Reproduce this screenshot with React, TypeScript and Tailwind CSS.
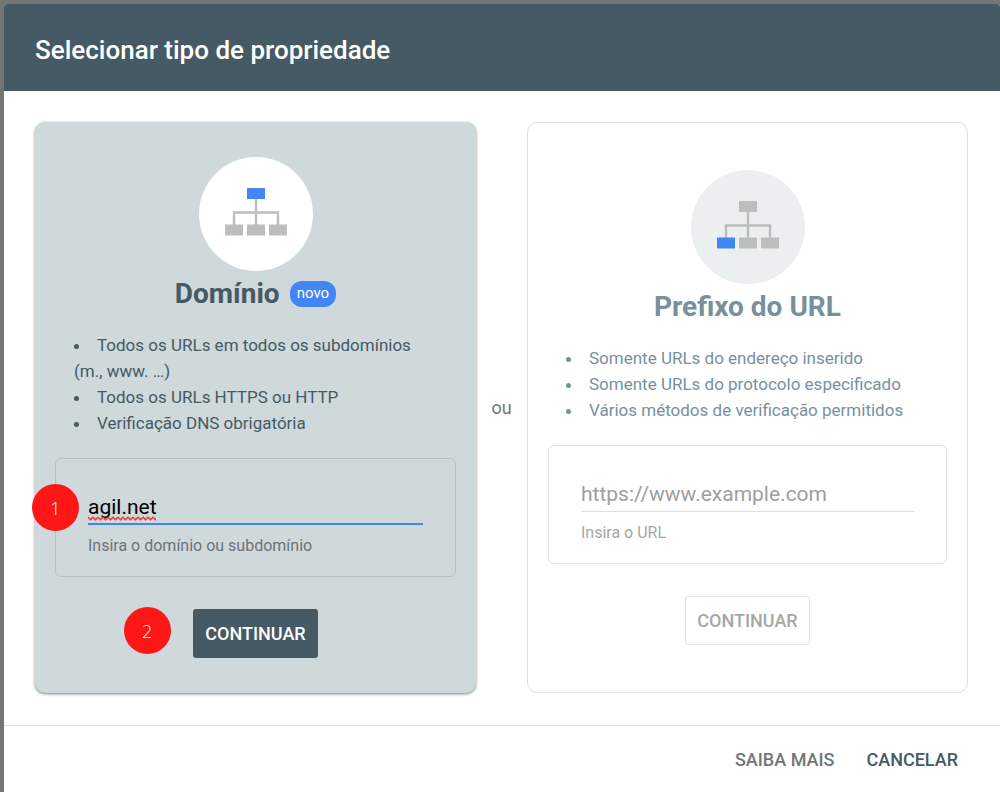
import type { ReactNode } from 'react';

const BLUE = '#4285f4';
const GREY = '#bdbdbd';

function SitemapIcon({ highlight }: { highlight: 'root' | 'leaf' }) {
  return (
    <svg className="mb-1" width="62" height="48" viewBox="0 0 62 48" aria-hidden="true">
      <path d="M31 10V38M9 38V24.5H53V38" fill="none" stroke={GREY} strokeWidth="2.4" />
      <rect x="22" y="0" width="18" height="11" fill={highlight === 'root' ? BLUE : GREY} />
      <rect x="0" y="36.5" width="18" height="11" fill={highlight === 'leaf' ? BLUE : GREY} />
      <rect x="22" y="36.5" width="18" height="11" fill={GREY} />
      <rect x="44" y="36.5" width="18" height="11" fill={GREY} />
    </svg>
  );
}

function SpellingMark() {
  return (
    <svg
      className="pointer-events-none absolute bottom-1 left-0"
      width="68"
      height="5"
      viewBox="0 0 68 5"
      aria-hidden="true"
    >
      <defs>
        <pattern id="spelling-wave" width="5" height="5" patternUnits="userSpaceOnUse">
          <path d="M-1 0.2L0 1.2L2.5 3.7L5 1.2L6 0.2" fill="none" stroke="#f03535" strokeWidth="1.5" />
        </pattern>
      </defs>
      <rect width="68" height="5" fill="url(#spelling-wave)" />
    </svg>
  );
}

function Step({ children, className }: { children: ReactNode; className: string }) {
  return (
    <span
      className={`absolute flex size-[47px] items-center justify-center rounded-full bg-[#ff1616] font-['Open_Sans',sans-serif] text-lg font-light text-white ${className}`}
    >
      {children}
    </span>
  );
}

export default function App() {
  return (
    <div className="min-h-screen bg-[#757575] pt-1 pl-1 font-[Roboto,sans-serif]">
      <div
        role="dialog"
        aria-labelledby="dialog-title"
        className="flex min-h-[calc(100vh-4px)] flex-col overflow-hidden rounded-t-[3px] bg-white"
      >
        <header className="bg-[#455a64] px-[31px] pt-[30px] pb-[25px]">
          <h1 id="dialog-title" className="text-[26px] leading-8 font-medium text-white">
            Selecionar tipo de propriedade
          </h1>
        </header>

        <main className="grid grow grid-cols-[1fr_51px_1fr] pt-[31px] pr-8 pb-8 pl-[31px]">
          <section className="flex flex-col items-center justify-center rounded-[10px] bg-[#cfd8db] px-5 py-[35px] shadow-[0_1px_3px_rgba(0,0,0,0.5)]">
            <div className="flex size-[114px] items-center justify-center rounded-full bg-white">
              <SitemapIcon highlight="root" />
            </div>
            <div className="mb-4 flex h-[45px] items-center gap-[10px]">
              <h2 className="text-[28px] font-bold text-[#455a64]">Domínio</h2>
              <span className="flex h-[26px] items-center rounded-xl bg-[#4285f4] px-[7px] text-[15px] text-white">
                novo
              </span>
            </div>
            <ul className="w-full list-inside list-disc px-[19px] text-[17px] leading-[26px] text-[#455a64]">
              <li>Todos os URLs em todos os subdomínios (m., www. …)</li>
              <li>Todos os URLs HTTPS ou HTTP</li>
              <li>Verificação DNS obrigatória</li>
            </ul>
            <div className="relative mt-[22px] w-full rounded-md border border-[#b7c0c4] px-8 pt-8 pb-5">
              <Step className="top-[25px] -left-6">1</Step>
              <div className="relative">
                <input
                  id="domain"
                  type="text"
                  defaultValue="agil.net"
                  spellCheck={false}
                  className="block h-[34px] w-full border-b-2 border-[#4285f4] bg-transparent text-[21px] text-black outline-none"
                />
                <SpellingMark />
              </div>
              <label htmlFor="domain" className="mt-[11px] block text-base leading-5 text-[#6b7478]">
                Insira o domínio ou subdomínio
              </label>
            </div>
            <div className="relative mt-8">
              <Step className="-top-[2px] right-[147px]">2</Step>
              <button
                type="button"
                className="h-[49px] rounded-[3px] bg-[#455a64] px-3 text-lg font-medium text-white"
              >
                CONTINUAR
              </button>
            </div>
          </section>

          <div className="flex items-center justify-center text-lg text-[#757575]">ou</div>

          <section className="flex flex-col items-center justify-center rounded-[10px] border border-[#e0e0e0] px-5 py-[35px]">
            <div className="flex size-[114px] items-center justify-center rounded-full bg-[#eceff0]">
              <SitemapIcon highlight="leaf" />
            </div>
            <div className="mb-4 flex h-[45px] items-center">
              <h2 className="text-[28px] font-bold text-[#78909c]">Prefixo do URL</h2>
            </div>
            <ul className="w-full list-inside list-disc px-[18px] text-[17px] leading-[26px] text-[#78909c]">
              <li>Somente URLs do endereço inserido</li>
              <li>Somente URLs do protocolo especificado</li>
              <li>Vários métodos de verificação permitidos</li>
            </ul>
            <div className="mt-[22px] w-full rounded-md border border-[#e0e0e0] px-8 pt-8 pb-5">
              <input
                id="url"
                type="text"
                placeholder="https://www.example.com"
                className="block h-[34px] w-full border-b border-[#e0e0e0] bg-transparent pb-[2px] text-[21px] text-black outline-none placeholder:text-[#9e9e9e]"
              />
              <label htmlFor="url" className="mt-[11px] block text-base leading-5 text-[#a6a6a6]">
                Insira o URL
              </label>
            </div>
            <button
              type="button"
              className="mt-8 h-[49px] rounded-[3px] border border-[#e0e0e0] px-[11px] text-lg font-medium text-[#a6a6a6]"
            >
              CONTINUAR
            </button>
          </section>
        </main>

        <footer className="flex justify-end gap-8 border-t border-[#e0e0e0] px-[42px] pt-5 pb-[18px] text-lg font-medium">
          <button type="button" className="text-[#757575]">
            SAIBA MAIS
          </button>
          <button type="button" className="text-[#455a64]">
            CANCELAR
          </button>
        </footer>
      </div>
    </div>
  );
}
